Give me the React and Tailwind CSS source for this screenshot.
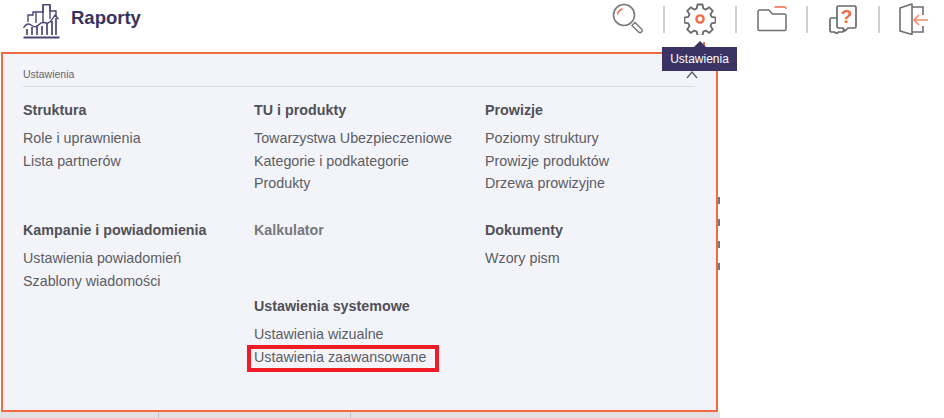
import React from "react";

const sections = [
  { title: "Struktura", items: ["Role i uprawnienia", "Lista partnerów"] },
  { title: "TU i produkty", items: ["Towarzystwa Ubezpieczeniowe", "Kategorie i podkategorie", "Produkty"] },
  { title: "Prowizje", items: ["Poziomy struktury", "Prowizje produktów", "Drzewa prowizyjne"] },
  { title: "Kampanie i powiadomienia", items: ["Ustawienia powiadomień", "Szablony wiadomości"] },
  { title: "Kalkulator", items: [], muted: true },
  { title: "Dokumenty", items: ["Wzory pism"] },
  { title: "", items: [] },
  { title: "Ustawienia systemowe", items: ["Ustawienia wizualne", "Ustawienia zaawansowane"] },
];

const LogoIcon = () => (
  <svg width="38" height="36" viewBox="0 0 38 36" fill="none" stroke="#4b4672" strokeWidth="1.4">
    <path d="M0.500 33.500h36" strokeWidth="2" />
    <path d="M4 31v-6M9 31v-8M14 31v-10M19 31v-9M24 31v-12M29 31v-14M33 31v-17" strokeWidth="1.700" />
    <path d="M0.500 24c2.500-4 4.500-5 7.500-3s5 3 7.500 0 5-3 8-2 5.500-3 8.500-8l3.500 4" />
    <path d="M5 18v-7h5V8h10V0.700h7V7h6v5" />
    <path d="M13 8v11M20 1v17M27 1v14" />
  </svg>
);

const SearchIcon = () => (
  <svg width="32" height="32" viewBox="0 0 32 32" fill="none">
    <circle cx="12" cy="12" r="10.500" stroke="#7a7a7a" strokeWidth="1.600" />
    <path d="M5.500 11.500a7 7 0 0 1 5-5.500" stroke="#f26a3f" strokeWidth="1.400" />
    <path d="M22 20.500l1-1 6.500 6.500a1.800 1.800 0 0 1-3 3L20 22.500z" stroke="#7a7a7a" strokeWidth="1.500" />
  </svg>
);

const GearIcon = () => (
  <svg width="32" height="32" viewBox="0 0 32 32" fill="none">
    <path
      d="M13.500 1.500h5l.8 4 2.600 1.100 3.400-2.300 3.500 3.500-2.300 3.400 1.100 2.600 4 .8v5l-4 .8-1.100 2.600 2.300 3.400-3.500 3.500-3.400-2.300-2.600 1.100-.8 4h-5l-.8-4-2.600-1.100-3.400 2.300-3.500-3.500 2.300-3.400-1.100-2.600-4-.8v-5l4-.8 1.100-2.600-2.300-3.400 3.500-3.500 3.400 2.300 2.600-1.100z"
      stroke="#6a6a6a"
      strokeWidth="1.800"
      strokeLinejoin="round"
    />
    <circle cx="16" cy="16" r="3.600" stroke="#f26a3f" strokeWidth="2.400" />
  </svg>
);

const FolderIcon = () => (
  <svg width="30" height="26" viewBox="0 0 30 26" fill="none">
    <path d="M1 23V5.500A1.500 1.500 0 0 1 2.500 4H12l3.500 4h12A1.500 1.500 0 0 1 29 9.500V23a1.500 1.500 0 0 1-1.500 1.500h-25A1.500 1.500 0 0 1 1 23z" stroke="#6f6f6f" strokeWidth="1.500" />
    <path d="M17.500 1H27a2 2 0 0 1 2 2" stroke="#f26a3f" strokeWidth="1.300" />
  </svg>
);

const HelpIcon = () => (
  <svg width="28" height="30" viewBox="0 0 28 30" fill="none">
    <path d="M9.500 2h16A1.500 1.500 0 0 1 27 3.500v19a1.500 1.500 0 0 1-1.500 1.500H19l-3 3-2-3H9.500A1.500 1.500 0 0 1 8 22.500V3.500A1.500 1.500 0 0 1 9.500 2z" stroke="#6a6a6a" strokeWidth="1.700" />
    <path d="M8 14H2.500A1.500 1.500 0 0 0 1 15.500v11A1.500 1.500 0 0 0 2.500 28h3l2 1.500 2-1.500H13a1.500 1.500 0 0 0 1.500-1.500V25" stroke="#6a6a6a" strokeWidth="1.700" />
    <text x="17.500" y="18.500" textAnchor="middle" fontFamily="Liberation Sans" fontWeight="700" fontSize="19" fill="#f26a3f">?</text>
  </svg>
);

const DoorIcon = () => (
  <svg width="30" height="32" viewBox="0 0 30 32" fill="none">
    <path d="M13 1L1 5v23l12 3.500z" stroke="#6f6f6f" strokeWidth="1.600" strokeLinejoin="round" />
    <path d="M13 4h11v8M24 23v6H13" stroke="#6f6f6f" strokeWidth="1.600" />
    <path d="M29 17H15M20 12l-5 5 5 5" stroke="#f58a66" strokeWidth="1.700" />
  </svg>
);

const Divider = () => <div className="w-[2px] h-[27px] bg-[#d0d0d0]" />;

const Section = ({ title, items, muted }) => (
  <div>
    <h3 className={`text-[14.300px] leading-[20px] font-bold ${muted ? "text-[#77777c]" : "text-[#505056]"}`}>{title}</h3>
    <ul className="mt-[7px]">
      {items.map((item) => (
        <li key={item} className="relative text-[14.300px] leading-[22.500px] text-[#5c5c63]">
          {item}
          {item === "Ustawienia zaawansowane" && (
            <span className="absolute left-[-7px] top-[-1px] w-[192px] h-[27px] border-[4px] border-[#ee1c25]" />
          )}
        </li>
      ))}
    </ul>
  </div>
);

export default function App() {
  return (
    <div className="relative w-[944px] h-[418px] bg-white overflow-hidden font-['Liberation_Sans',Arial,sans-serif]">
      <header className="flex items-center h-[52px]">
        <div className="ml-[23px] mt-[-8px]">
          <LogoIcon />
        </div>
        <h1 className="ml-[10px] mt-[-16px] text-[18.500px] font-bold text-[#38335f]">Raporty</h1>
        <div className="ml-auto mr-[15px] mt-[-14px] flex items-center">
          <SearchIcon />
          <div className="ml-[19px] mr-[19px]"><Divider /></div>
          <GearIcon />
          <div className="ml-[19px] mr-[20px]"><Divider /></div>
          <FolderIcon />
          <div className="ml-[19px] mr-[21px]"><Divider /></div>
          <HelpIcon />
          <div className="ml-[21px] mr-[19px]"><Divider /></div>
          <DoorIcon />
        </div>
      </header>

      <div className="flex w-[720px] h-[360px]">
        <section className="ml-[1px] w-[717px] h-[360px] border-2 border-[#f26a3f] bg-[#f3f4fa] pl-[20px] pt-[11px]">
          <div className="flex items-center w-[672px] h-[22px] border-b border-[#dcdde3] pb-[2px]">
            <span className="text-[10.500px] text-[#66666e]">Ustawienia</span>
          </div>
          <div className="grid grid-cols-[231px_231px_231px] grid-rows-[120px_76px_auto] mt-[13px]">
            {sections.map((s, i) => (
              <Section key={i} {...s} />
            ))}
          </div>
        </section>
        <div className="flex flex-col gap-[15px] w-[2px] pt-[145px]">
          <span className="h-[7px] bg-[#777]" />
          <span className="h-[7px] bg-[#777]" />
          <span className="h-[7px] bg-[#777]" />
          <span className="h-[7px] bg-[#777]" />
        </div>
      </div>
      <div className="flex w-[720px] h-[6px] bg-[#e2e2e2]">
        <div className="w-[159px] border-r border-[#c4c4c4]" />
        <div className="w-[192px] border-r border-[#c4c4c4]" />
      </div>

      {/* tooltip over the panel */}
      <div className="absolute left-[703px] top-[42px] w-[2px] h-[10px] bg-[#f26a3f]" />
      <div className="absolute left-[686px] top-[68px]">
        <svg width="12" height="11" viewBox="0 0 12 11" fill="none" stroke="#55555f" strokeWidth="1.200">
          <path d="M1 10l5-6 5 6" />
        </svg>
      </div>
      <div className="absolute left-[662px] top-[47px] w-[75px] h-[24px] bg-[#3a3364] text-white text-[12px] leading-[24px] text-center">
        Ustawienia
      </div>
      <div className="absolute left-[694px] top-[41px] w-0 h-0 border-l-[6px] border-r-[6px] border-b-[6px] border-l-transparent border-r-transparent border-b-[#3a3364]" />
    </div>
  );
}
